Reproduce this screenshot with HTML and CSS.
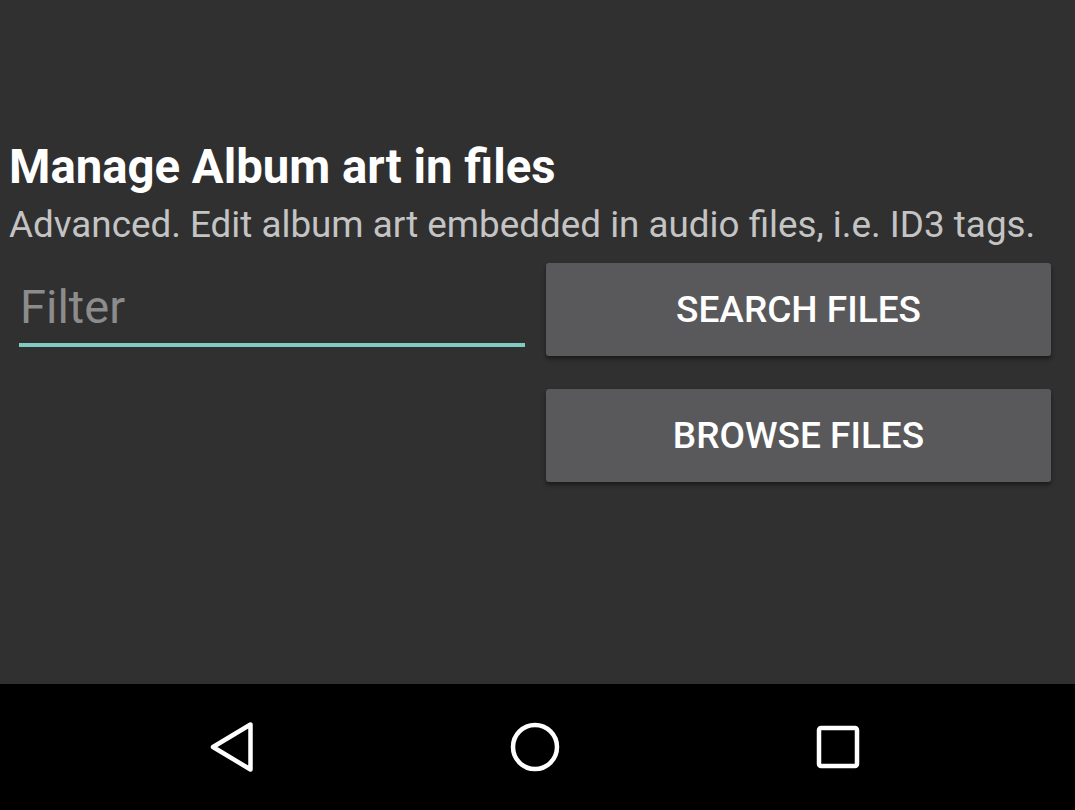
FILE: index.html
```html
<!DOCTYPE html>
<html>
<head>
<meta charset="utf-8">
<link rel="stylesheet" href="styles.css">
</head>
<body>
<div class="screen">
  <main class="content">
    <h1 class="title">Manage Album art in files</h1>
    <p class="subtitle">Advanced. Edit album art embedded in audio files, i.e. ID3 tags.</p>
    <div class="controls">
      <div class="filter-col">
        <div class="filter">
          <span class="filter-text">Filter</span>
        </div>
      </div>
      <div class="button-col">
        <button class="btn">SEARCH FILES</button>
        <button class="btn">BROWSE FILES</button>
      </div>
    </div>
  </main>
  <nav class="navbar">
    <svg class="nav-icon" width="60" height="60" viewBox="0 0 60 60">
      <path d="M48.5 7.5 L48.5 52.5 L11 30 Z" fill="none" stroke="#ffffff" stroke-width="4.5" stroke-linejoin="round"/>
    </svg>
    <svg class="nav-icon" width="60" height="60" viewBox="0 0 60 60">
      <circle cx="30" cy="30" r="22" fill="none" stroke="#ffffff" stroke-width="4.5"/>
    </svg>
    <svg class="nav-icon" width="60" height="60" viewBox="0 0 60 60">
      <rect x="11" y="11" width="38" height="38" rx="2" fill="none" stroke="#ffffff" stroke-width="4.5"/>
    </svg>
  </nav>
</div>
</body>
</html>
```

FILE: styles.css
```css
html, body {
  margin: 0;
  padding: 0;
  background: #000;
}
.screen {
  width: 1075px;
  height: 810px;
  display: flex;
  flex-direction: column;
  font-family: Roboto, "Liberation Sans", sans-serif;
}
.content {
  height: 684px;
  flex: none;
  background: #303030;
  padding: 139px 24px 0 9px;
  box-sizing: border-box;
}
.title {
  margin: 0;
  font-size: 47.3px;
  font-weight: 700;
  color: #ffffff;
  line-height: 56px;
}
.subtitle {
  margin: 6px 0 0 0;
  font-size: 36.8px;
  font-weight: 400;
  color: #c4c4c4;
  line-height: 48px;
  white-space: nowrap;
}
.controls {
  display: flex;
  gap: 21px;
  margin-top: 14px;
}
.filter-col {
  width: 506px;
  padding-left: 10px;
}
.filter {
  border-bottom: 4px solid #80cbc4;
  height: 71px;
  display: flex;
  align-items: flex-end;
  padding-bottom: 9px;
  padding-left: 1px;
  box-sizing: content-box;
}
.filter-text {
  font-size: 47px;
  line-height: 55px;
  color: #8c8c8c;
}
.button-col {
  display: flex;
  flex-direction: column;
  gap: 33px;
  width: 505px;
}
.btn {
  height: 93px;
  border: none;
  border-radius: 3px;
  background: #59595b;
  color: #ffffff;
  font-family: Roboto, "Liberation Sans", sans-serif;
  font-size: 37px;
  font-weight: 500;
  box-shadow: 0 3px 4px rgba(0,0,0,0.45);
  padding: 0;
}
.navbar {
  height: 126px;
  flex: none;
  background: #000;
  display: flex;
  align-items: center;
  gap: 243px;
  padding-left: 202px;
}
```
